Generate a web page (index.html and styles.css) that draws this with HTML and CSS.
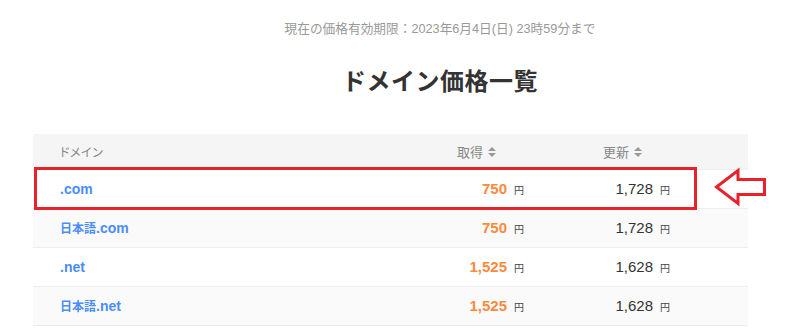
FILE: index.html
```html
<!DOCTYPE html>
<html lang="ja">
<head>
<meta charset="utf-8">
<title>ドメイン価格一覧</title>
<link rel="stylesheet" href="styles.css">
</head>
<body>
<div class="page">
  <p class="notice">現在の価格有効期限：2023年6月4日(日) 23時59分まで</p>
  <h1 class="title">ドメイン価格一覧</h1>
  <div class="table">
    <div class="row head">
      <div class="cell name">ドメイン</div>
      <div class="cell hcol">取得 <span class="sort"></span></div>
      <div class="cell hcol">更新 <span class="sort"></span></div>
      <div class="cell"></div>
    </div>
    <div class="row">
      <div class="cell name"><a class="dom">.com</a></div>
      <div class="cell price"><span class="get">750</span><span class="yen">円</span></div>
      <div class="cell price"><span class="renew">1,728</span><span class="yen">円</span></div>
      <div class="cell"></div>
    </div>
    <div class="row alt">
      <div class="cell name"><a class="dom"><span class="ja">日本語</span>.com</a></div>
      <div class="cell price"><span class="get">750</span><span class="yen">円</span></div>
      <div class="cell price"><span class="renew">1,728</span><span class="yen">円</span></div>
      <div class="cell"></div>
    </div>
    <div class="row">
      <div class="cell name"><a class="dom">.net</a></div>
      <div class="cell price"><span class="get">1,525</span><span class="yen">円</span></div>
      <div class="cell price"><span class="renew">1,628</span><span class="yen">円</span></div>
      <div class="cell"></div>
    </div>
    <div class="row alt">
      <div class="cell name"><a class="dom"><span class="ja">日本語</span>.net</a></div>
      <div class="cell price"><span class="get">1,525</span><span class="yen">円</span></div>
      <div class="cell price"><span class="renew">1,628</span><span class="yen">円</span></div>
      <div class="cell"></div>
    </div>
  </div>
  <div class="highlight"></div>
  <svg class="arrow" width="56" height="44" viewBox="0 0 56 44">
    <polygon points="3.5,22 25,5.5 25,14.5 51.5,14.5 51.5,29.5 25,29.5 25,38.5" fill="#fff" stroke="#e8212b" stroke-width="3" stroke-linejoin="miter"/>
  </svg>
</div>
</body>
</html>
```
FILE: styles.css
```css
html, body {
  margin: 0;
  padding: 0;
  background: #fff;
}
body {
  font-family: "Liberation Sans", Arial, "Noto Sans CJK JP", sans-serif;
  color: #333;
}
.page {
  position: relative;
  width: 800px;
  height: 332px;
  overflow: hidden;
}
.notice {
  margin: 0;
  padding: 21px 0 0 80px;
  text-align: center;
  font-size: 12.7px;
  line-height: 17px;
  color: #999;
}
.title {
  margin: 0;
  padding: 27px 0 0 80px;
  text-align: center;
  font-size: 24px;
  line-height: 34px;
  font-weight: bold;
  color: #333;
  letter-spacing: 0.5px;
}
.table {
  margin: 35px 52px 0 33px;
}
.row {
  display: grid;
  grid-template-columns: 414px 146px 146px 1fr;
  height: 38px;
  align-items: center;
  border-bottom: 1px solid #eee;
  background: #fff;
}
.row.head {
  height: 35px;
  background: #f5f5f5;
  border-bottom: 1px solid #f0f0f0;
  font-size: 12px;
  color: #888;
}
.row.alt {
  background: #fafafa;
}
.cell.name {
  padding-left: 27px;
}
.head .name {
  font-feature-settings: "palt";
  letter-spacing: 0.5px;
}
.hcol {
  padding-left: 10px;
  font-size: 13px;
  display: flex;
  align-items: center;
  gap: 4px;
}
.sort {
  display: inline-flex;
  flex-direction: column;
  gap: 2px;
  margin-left: 1px;
}
.sort::before,
.sort::after {
  content: "";
  display: block;
  width: 0;
  height: 0;
  border-left: 4px solid transparent;
  border-right: 4px solid transparent;
}
.sort::before {
  border-bottom: 4px solid #999;
}
.sort::after {
  border-top: 4px solid #999;
}
.dom {
  color: #4b8df8;
  font-weight: bold;
  font-size: 14px;
  text-decoration: none;
}
.dom .ja {
  font-size: 12px;
}
.price {
  text-align: right;
  padding-right: 69px;
  white-space: nowrap;
}
.get {
  color: #fb8a3c;
  font-weight: bold;
  font-size: 15px;
}
.renew {
  color: #333;
  font-size: 15px;
}
.yen {
  font-size: 10px;
  color: #444;
  margin-left: 7px;
}
.highlight {
  position: absolute;
  left: 34px;
  top: 167px;
  width: 657px;
  height: 37px;
  border: 3px solid #e8212b;
}
.arrow {
  position: absolute;
  left: 713px;
  top: 165px;
}
```
